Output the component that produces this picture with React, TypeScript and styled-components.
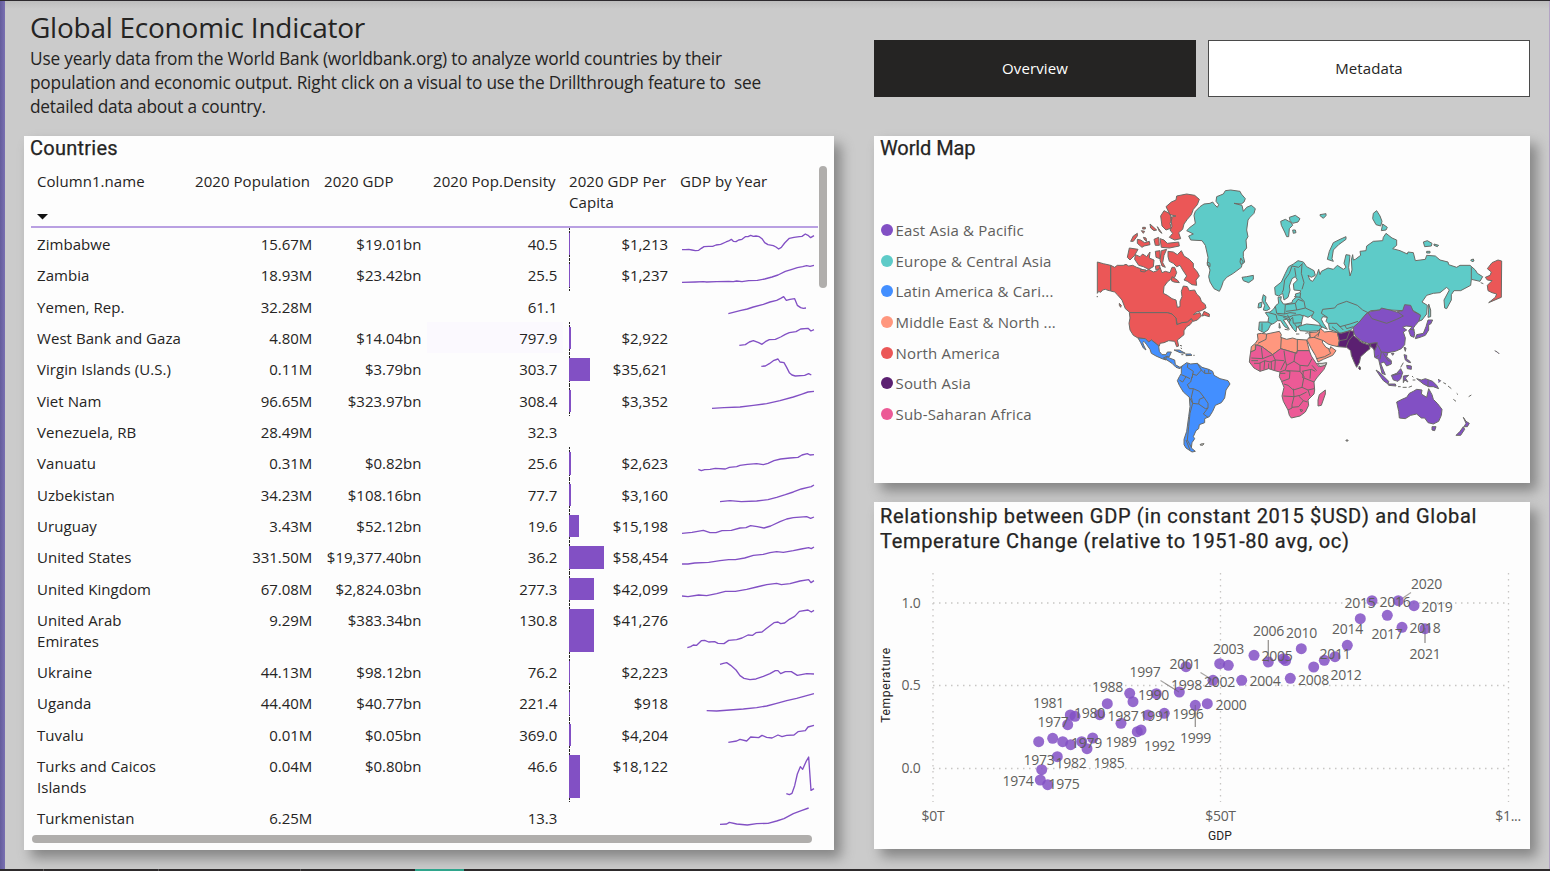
import React from "react";
import styled, { createGlobalStyle } from "styled-components";

const Global = createGlobalStyle`
  body { margin: 0; font-family: "Open Sans", "Noto Sans", sans-serif; color: #252423; }
  * { box-sizing: border-box; }
`;

const Page = styled.div`
  width: 1550px;
  height: 871px;
  overflow: hidden;
  display: flex;
  flex-direction: column;
  background: #cbcbcb;
  border-top: 1px solid #2d2a2e;
`;
const Body = styled.div`
  flex: 1;
  display: flex;
  min-height: 0;
  border-right: 1px solid #b3a3c4;
  background: linear-gradient(#bdbdbd, #cbcbcb 8px);
`;
const Rail = styled.div`
  width: 5px;
  background: linear-gradient(90deg, #645d9c, #7a70b2);
`;
const Left = styled.div`
  width: 810px;
  margin-left: 19px;
  display: flex;
  flex-direction: column;
`;
const Right = styled.div`
  width: 656px;
  margin-left: 40px;
  display: flex;
  flex-direction: column;
`;
const Intro = styled.header`
  height: 135px;
  padding: 6px 0 0 6px;
`;
const Heading = styled.h1`
  margin: 0;
  font-size: 28px;
  line-height: 40px;
  font-weight: 400;
  letter-spacing: -0.25px;
  white-space: nowrap;
`;
const Description = styled.p`
  margin: 0;
  font-size: 17.3px;
  line-height: 24px;
  letter-spacing: -0.21px;
  white-space: pre;
`;
const Card = styled.section<{ $h: number; $gap?: number }>`
  height: ${(p) => p.$h}px;
  margin-top: ${(p) => p.$gap ?? 0}px;
  flex: none;
  background: #fdfdfd;
  box-shadow: 7px 8px 12px 0 #858585;
  display: flex;
  flex-direction: column;
`;
const CardTitle = styled.h2<{ $track: number; $drop?: number }>`
  margin: 0;
  padding: ${(p) => p.$drop ?? 0}px 0 0 6px;
  font: 400 20px/25px Roboto, sans-serif;
  -webkit-text-stroke: 0.25px currentColor;
  letter-spacing: ${(p) => p.$track}px;
  white-space: pre;
`;

const Tabs = styled.nav`
  display: flex;
  gap: 12px;
  height: 57px;
  margin: 39px 0;
`;
const Tab = styled.button<{ $active?: boolean }>`
  flex: 1;
  padding: 0 0 2px;
  border: 1px solid ${(p) => (p.$active ? "#252423" : "#4a4a4a")};
  background: ${(p) => (p.$active ? "#252423" : "#fff")};
  color: ${(p) => (p.$active ? "#fff" : "#252423")};
  font: 400 15px "Open Sans", sans-serif;
  letter-spacing: 0.1px;
`;

const TableArea = styled.div`
  flex: 1;
  display: flex;
  padding: 5px 7px 0 7px;
  min-height: 0;
`;
const Table = styled.div`
  width: 787px;
  font-size: 15px;
  line-height: 21px;
  letter-spacing: 0.06px;
  overflow: hidden;
`;
const HeadRow = styled.div`
  display: grid;
  grid-template-columns: 158px 129px 109px 136px 111px 144px;
  height: 62px;
  padding-top: 5px;
  border-bottom: 2px solid #b9a0e2;
`;
const HeadCell = styled.div`
  padding-left: 6px;
`;
const SortMark = styled.svg`
  display: block;
  margin-top: 22px;
`;
const Row = styled.div<{ $tall?: boolean }>`
  display: grid;
  grid-template-columns: 158px 129px 109px 129px 13px 104px 145px;
  height: ${(p) => (p.$tall ? 52 : 31.35)}px;
`;
const Cell = styled.div<{ $right?: boolean }>`
  padding: 6px 6px 0;
  text-align: ${(p) => (p.$right ? "right" : "left")};
  white-space: pre;
`;
const NumberCell = styled(Cell)`
  padding-right: 5.7px;
  letter-spacing: -0.03px;
`;
const DensityCell = styled(NumberCell)<{ $tint: boolean }>`
  margin-right: -7px;
  background: ${(p) => (p.$tint ? "#fbf9fe" : "none")};
`;
const BarCell = styled.div<{ $axis: boolean }>`
  grid-column: 5 / 7;
  display: flex;
  align-items: stretch;
  padding: 5px 5px 4px 0;
  margin-left: 13px;
  background: ${(p) =>
    p.$axis ? "repeating-linear-gradient(#252423 0 2px, transparent 2px 3px) 0 0 / 1px 100% no-repeat" : "none"};
`;
const Bar = styled.div`
  background: #8250c4;
`;
const BarValue = styled.span`
  margin-left: auto;
  padding-top: 1px;
  letter-spacing: -0.03px;
`;
const Spark = styled.svg`
  display: block;
  width: 140px;
  margin-left: 7px;
`;
const VScroll = styled.div`
  width: 8px;
  height: 122px;
  margin-left: 1px;
  border-radius: 4px;
  background: #b0aeac;
`;
const HScroll = styled.div`
  width: 780px;
  height: 8px;
  margin: 0 0 7px 8px;
  border-radius: 4px;
  background: #b0aeac;
`;

type Country = {
  name: string;
  pop: string;
  gdp: string;
  density: string;
  perCapita: string;
  bar: number;
  top: number;
  line: string;
  tall?: boolean;
};

const countries: Country[] = [
  { name: "Zimbabwe", pop: "15.67M", gdp: "$19.01bn", density: "40.5", perCapita: "$1,213", bar: 1, top: 12, line: "66,77 76,77 86,76 96,78 106,80 116,79 124,73 132,68 146,67 158,67 168,63 182,61 198,54 206,51 214,46 220,52 228,53 236,48 246,46 256,38 264,38 272,34 280,37 288,36 298,38 306,44 314,56 324,62 340,65 348,69 356,75 364,70 374,57 388,43 402,40 418,38 426,37 436,30 444,34 452,41 462,35" },
  { name: "Zambia", pop: "18.93M", gdp: "$23.42bn", density: "25.5", perCapita: "$1,237", bar: 1, top: 106, line: "66,176 106,175 130,174 140,175 170,174 206,173 220,174 230,172 246,174 266,171 292,170 314,166 336,160 354,154 376,143 396,137 412,132 428,129 440,126 450,128 462,125" },
  { name: "Yemen, Rep.", pop: "32.28M", gdp: "", density: "61.1", perCapita: "", bar: 0, top: 200, line: "205,268 240,259 262,254 280,248 310,240 330,233 350,228 362,222 371,217 379,228 390,225 404,223 412,243 422,250 430,252 438,251" },
  { name: "West Bank and Gaza", pop: "4.80M", gdp: "$14.04bn", density: "797.9", perCapita: "$2,922", bar: 1.6, top: 294, line: "238,364 256,362 268,354 280,350 296,356 306,361 316,353 328,347 346,346 362,339 376,331 388,326 408,323 422,315 444,313 453,321 462,317" },
  { name: "Virgin Islands (U.S.)", pop: "0.11M", gdp: "$3.79bn", density: "303.7", perCapita: "$35,621", bar: 21, top: 388, line: "304,428 316,427 328,420 340,411 354,406 360,415 372,417 380,431 388,447 396,454 406,457 434,455 446,450 454,454" },
  { name: "Viet Nam", pop: "96.65M", gdp: "$323.97bn", density: "308.4", perCapita: "$3,352", bar: 1.8, top: 482, line: "156,552 192,550 240,548 280,543 320,538 360,529 400,518 424,510 444,503 462,501" },
  { name: "Venezuela, RB", pop: "28.49M", gdp: "", density: "32.3", perCapita: "", bar: 0, top: 576, line: "" },
  { name: "Vanuatu", pop: "0.31M", gdp: "$0.82bn", density: "25.6", perCapita: "$2,623", bar: 1.5, top: 670, line: "115,737 124,741 134,738 150,737 166,734 196,736 208,731 230,729 240,725 262,722 290,720 310,723 324,719 342,711 362,706 390,703 414,701 426,694 442,690 450,694 462,693" },
  { name: "Uzbekistan", pop: "34.23M", gdp: "$108.16bn", density: "77.7", perCapita: "$3,160", bar: 1.7, top: 764, line: "180,832 210,829 244,832 290,830 324,826 350,819 376,811 400,803 424,794 444,789 454,787 462,782" },
  { name: "Uruguay", pop: "3.43M", gdp: "$52.12bn", density: "19.6", perCapita: "$15,198", bar: 9.5, top: 858, line: "66,928 96,925 130,919 150,926 168,926 186,920 214,919 240,912 258,911 272,905 292,908 312,912 332,906 360,893 380,885 400,881 440,878 452,883 462,879" },
  { name: "United States", pop: "331.50M", gdp: "$19,377.40bn", density: "36.2", perCapita: "$58,454", bar: 34.5, top: 7, line: "66,76 84,76 104,73 146,71 180,66 206,63 226,63 254,58 280,50 310,47 330,42 350,39 370,41 400,36 424,31 446,27 454,30 462,25" },
  { name: "United Kingdom", pop: "67.08M", gdp: "$2,824.03bn", density: "277.3", perCapita: "$42,099", bar: 24.5, top: 101, line: "66,170 84,172 116,167 140,169 170,163 196,156 226,156 260,150 290,143 320,136 350,132 364,136 390,133 420,125 446,121 453,130 462,124" },
  { name: "United Arab\nEmirates", pop: "9.29M", gdp: "$383.34bn", density: "130.8", perCapita: "$41,276", bar: 24.5, top: 195, tall: true, line: "82,326 92,323 100,318 110,319 124,305 134,304 146,309 164,308 174,313 192,314 206,304 230,302 246,297 264,288 278,289 288,281 306,279 318,269 330,260 342,251 354,249 362,254 374,252 388,241 404,232 418,217 444,213 454,219 462,214" },
  { name: "Ukraine", pop: "44.13M", gdp: "$98.12bn", density: "76.2", perCapita: "$2,223", bar: 1.4, top: 351, line: "180,376 190,373 200,371 212,379 228,393 240,410 252,418 270,422 288,420 310,412 330,404 346,395 354,395 362,404 376,398 394,398 412,409 440,404 462,405" },
  { name: "Uganda", pop: "44.40M", gdp: "$40.77bn", density: "221.4", perCapita: "$918", bar: 0.8, top: 445, line: "140,516 170,517 210,514 250,511 290,507 320,502 350,494 380,486 410,479 440,471 462,465" },
  { name: "Tuvalu", pop: "0.01M", gdp: "$0.05bn", density: "369.0", perCapita: "$4,204", bar: 2.4, top: 539, line: "205,609 230,605 240,600 260,605 272,593 296,595 306,588 320,594 336,596 354,587 366,592 380,588 402,587 414,577 436,574 444,563 462,558" },
  { name: "Turks and Caicos\nIslands", pop: "0.04M", gdp: "$0.80bn", density: "46.6", perCapita: "$18,122", bar: 11, top: 633, tall: true, line: "379,764 388,767 396,763 404,740 412,705 421,683 428,691 438,668 446,654 453,754 462,749" },
  { name: "Turkmenistan", pop: "6.25M", gdp: "", density: "13.3", perCapita: "", bar: 0, top: 789, line: "180,856 200,855 208,850 230,855 262,858 290,854 324,853 350,846 372,839 400,824 424,815 446,807" },
];

const MapBody = styled.div`
  display: flex;
  flex: 1;
`;
const Legend = styled.ul`
  list-style: none;
  margin: 0;
  padding: 54px 0 0 7px;
  width: 206px;
  font-size: 15px;
  letter-spacing: 0.18px;
  color: #605e5c;
`;
const LegendItem = styled.li<{ $color: string }>`
  display: flex;
  align-items: center;
  gap: 2.5px;
  height: 30.6px;
  white-space: nowrap;
  &::before {
    content: "";
    width: 12px;
    height: 12px;
    border-radius: 50%;
    background: ${(p) => p.$color};
  }
`;
const MapSvg = styled.svg`
  margin-top: 19px;
`;

const PURPLE = "#8250c4";
const TEAL = "#5ecbc8";
const BLUE = "#438fff";
const PEACH = "#ff977e";
const RED = "#eb5757";
const PLUM = "#5b2071";
const PINK = "#ec5a96";

const legend: [string, string][] = [
  ["East Asia & Pacific", PURPLE],
  ["Europe & Central Asia", TEAL],
  ["Latin America & Cari...", BLUE],
  ["Middle East & North ...", PEACH],
  ["North America", RED],
  ["South Asia", PLUM],
  ["Sub-Saharan Africa", PINK],
];

type Shape = { x: number; y: number; fill: string; d: string };

const shapes: Shape[] = [
  // Alaska, Canada and the Arctic islands
  { x: 0, y: 0, fill: RED, d: "M52,246L70,251L92,256V333L84,331L76,328L68,330L62,337L56,334L52,340ZM92,256L104,262L112,256L130,256L138,253L146,258L158,256L170,262L182,266L196,274L206,268L220,276L232,272L240,262L246,278L256,274L270,278L276,262L284,262L290,278L284,292L272,298L262,306L252,320L250,340L262,346L276,356L288,360L292,382L300,380L300,364L306,350L304,334L310,318L322,320L328,332L344,330L350,342L360,352L364,364L376,374L378,384L364,392L350,396L340,404L352,400L360,398L364,408L352,420L340,424L334,416L322,428L308,428L292,434L288,414L276,402L262,398H150L136,386L126,360L112,344L104,336L92,333Z" },
  { x: 0, y: 0, fill: RED, d: "M290,48L320,42L344,46L358,58L352,74L340,88L334,104L322,118L312,132L308,148L296,158L302,176L284,180L268,172L278,160L270,150L276,140L272,112L288,108L270,104L258,80L274,66L288,60ZM252,92L268,100L276,116L270,130L274,144L258,150L246,138L242,108ZM210,132L230,150L222,152L212,144ZM232,140L246,160L238,154ZM188,142h8v5h-8ZM184,152l10,2l-4,6ZM152,184L160,168L172,160V168L160,184ZM172,178L182,180L194,188L208,184L210,194L192,198L186,202L172,190ZM190,172l8,2l2,10l-6,-4ZM222,178L236,172L238,196L226,196ZM240,176L252,180L262,190L296,186L298,198L268,204L244,202ZM148,204L174,208L164,226L150,240L142,232ZM166,224L180,230L188,222L200,230L210,216L208,234L222,240L220,260L206,268L190,260L176,256L164,238ZM226,214L240,212V236L228,232ZM244,212L260,208L252,226L248,248L256,262L246,258L240,240ZM264,214L280,216L292,224L304,212L312,228L328,238L340,250V262L352,276L358,288L348,300L350,316L336,314L322,304L312,300L320,288L308,270L300,256L290,260L280,250L268,244L264,230ZM276,290L292,300L298,308L282,306L274,302ZM372,394L388,402V410L374,406L366,408ZM182,268l16,2l-4,6l-12,-2ZM226,258l14,-2l-2,10l-10,4ZM118,370l6,6l-2,6l-4,-6ZM50,350l4,0" },
  { x: 0, y: 390, fill: RED, d: "M148,8H262L276,12L288,24L290,44L306,38L322,36L334,26L338,34L330,44L320,50L312,62V74L300,84L292,90L296,108L290,110L284,94L266,92L252,98L240,100L238,108L222,96L214,90L206,96L196,86L174,84L160,76L150,60L147,40L150,24Z" },
  // Latin America
  { x: 0, y: 390, fill: BLUE, d: "M174,84L196,86L206,96L214,90L222,96L236,108L238,124L246,134L258,134L262,126L274,126L268,140L258,142V150L246,146L228,138L214,130L210,118L200,104L192,94L188,98L192,108L198,120L190,114L182,98ZM250,144L262,138L268,144L284,150L286,164L300,172L306,168L300,176L288,172L276,160L264,152ZM282,120L298,120L316,130L300,128ZM318,132h14l4,4l-18,1ZM304,134h6M340,136h4M300,106l6,2M302,114l4,2" },
  { x: 0, y: 390, fill: BLUE, d: "M306,168L320,158L332,162L352,160L366,172L386,178L398,184L402,196L420,206L444,212L450,222L438,240L434,264L424,278L406,286L398,304L388,320L374,326V338L358,344L356,356L348,362L340,380L344,386L336,398L334,414L346,424L336,426L318,414L312,404V388L320,364L326,320L330,290L328,262L310,246L298,226L292,212L298,200L304,190V174Z" },
  // Greenland, Iceland and the northern islands
  { x: 0, y: 0, fill: TEAL, d: "M408,64L410,50L430,42L436,32L452,30L480,34L484,42L496,56L492,66L484,72L462,70L486,76L490,94L500,82L514,76L526,86L522,100L510,112L504,120L500,150L504,170L498,180L500,204L490,216V230L494,246L486,254L484,262L460,280L440,292L430,304L424,322L418,334L402,326L390,306L386,290L390,270L382,250L384,232L376,196L366,182L332,180L326,168L340,162L320,152L330,142L346,130L342,106L346,94L360,80L372,72L390,70L398,66L404,74L412,82L416,74ZM486,292L500,290L520,286V298L506,308L490,302ZM482,234l8,12l-6,8l-4,-8ZM382,246l8,4v10l-8,-4Z" },
  { x: 480, y: 0, fill: TEAL, d: "M122,124L136,118L154,128L158,136L148,146L146,170L140,170L134,156L124,136ZM148,112L166,106L180,116L174,126L158,130L150,122ZM158,150h8l2,8l-8,2ZM240,104l18,-3v6l-8,8l-10,-8ZM318,170V178L296,194L280,210L276,236L280,244L262,238L268,214L280,188L300,178ZM410,92L420,108L426,124L422,138L408,134L398,116L400,100ZM428,132L442,142L438,150L424,152ZM550,186L562,182L576,190L574,198L554,200ZM582,192l14,4l-4,4l-10,-4ZM560,214h10v5h-10ZM692,240l8,-3l2,6l-6,2ZM70,344L78,350L76,364L90,386L80,392L70,390L74,376L66,360ZM56,370L66,366L64,382L54,384ZM566,372L572,390V410L564,412L566,390Z" },
  // Mainland Europe, Russia and Central Asia
  { x: 480, y: 0, fill: TEAL, d: "M190,246L174,242L160,252L146,260L136,280L124,306L104,322L106,344L116,348L128,340L132,360L144,352L150,330L148,318L156,296L166,290L172,300L160,312L162,330L182,332L180,338L166,342L168,352L158,360L156,368L138,372L130,372L122,360L124,350L114,352L116,370L108,376L100,388L90,396L76,398L86,412L84,426H58L56,450L72,458L84,450L92,434L102,430L112,422L122,422L134,440L148,448L140,434L130,420L140,418L150,432L160,448L168,456L170,442L184,434L186,420L190,406L204,412L218,404L214,412L236,428L244,440L262,448L250,430L244,418L248,410L262,412L258,424L266,432L268,448L290,456L300,460L330,452L340,442L360,424L380,400L392,392L420,390L450,390L488,392L520,392L540,404L536,424L546,420L560,402L562,376L546,366L560,346L580,340L600,338L620,322L628,330L612,360L614,384L620,386L634,360V344L642,332H662L692,316L694,298L720,304L728,290L712,280L706,270L690,256H660L650,262L626,254L624,246L600,240L586,228L560,226L556,238L526,242L520,218L504,216L502,222L480,212L458,206L470,196V180L456,174L438,160L430,172L428,182L400,184L380,198L378,212L360,214L362,226L346,238L340,240L338,224L334,240L336,270L330,288L326,262L330,226L318,224L312,250L318,262L310,268L292,256L280,268L264,264L244,274L240,284L236,268L230,286L218,304L210,300L204,286L214,292L226,286L222,272L200,260Z" },
  { x: 480, y: 390, fill: TEAL, d: "M174,50L200,42L236,46L246,50L238,62L206,64L180,62ZM118,40l3,14l-4,0ZM134,58l12,2M168,72h10M196,70l8,-2" },
  { x: 480, y: 0, fill: RED, d: "M785,243L774,240L756,248L742,266L754,276L750,286L736,292L742,300L756,302L742,316L744,332L756,338L770,342L766,352L746,368L774,356L784,352ZM722,308l8,3" },
  // East Asia and Pacific
  { x: 480, y: 390, fill: PURPLE, d: "M340,52L356,38L378,12L392,4L420,0L424,-6L450,0L470,6L488,2L494,-16L512,-14L520,4L542,16L536,34L526,46L520,54L524,70L522,82L512,78L506,62L516,50L498,48L488,52L500,60L490,66L496,84L494,104L484,116L466,124L454,126L444,128L440,140L454,152V162L440,168L432,156L422,160L430,180L436,194L426,190L420,166L416,148L404,142L402,120L412,106L408,98L390,102L366,94L348,80L340,66Z" },
  { x: 480, y: 390, fill: PURPLE, d: "M564,30L578,30L572,42L566,44V60L556,76L540,82L526,86L530,74L550,70L558,50ZM492,112l6,2l-2,10ZM454,130h8l-4,6ZM492,134L500,136V148L508,152L512,158L504,156L496,150ZM500,166L514,168V178L502,176ZM482,172L490,158M408,180L420,188L436,204L446,214L444,222L430,212L420,198ZM444,222L466,222L468,228L446,226ZM474,230h8M488,232h12M506,232l10,-4M454,196L470,190L482,176L488,188L482,206L474,214L460,210ZM490,198L506,196L496,204L504,216L494,210L490,218ZM516,198l4,4M518,210h8M530,206L544,210L556,206L578,214L590,226L596,236L580,230L566,230L550,222L540,214ZM594,208l8,4l-6,6M610,218l8,4M624,228l10,8M640,268l8,6M650,250l4,4M686,260l8,-5M470,276L486,268L500,262L508,250L520,244L530,238L546,240L544,252L560,262L566,236L576,254L580,268L592,280L606,298L604,316L596,334L580,342L564,338L554,324L544,324L530,312L512,316L496,326L478,324L476,304ZM576,350L588,350L584,362L576,360ZM670,322L678,334L688,340L682,350L672,350L678,340ZM670,350L674,358L662,376L648,376L660,364ZM764,122l8,4l6,6" },
  { x: 480, y: 390, fill: PEACH, d: "M52,72L64,70L80,72L118,64L124,74L122,82L140,88L158,84L170,88L200,90L208,122H172L170,130L122,116L98,134L66,110L52,104L46,120L32,126L34,110L46,100L54,88ZM206,68L230,66L242,56L254,66L270,64L292,68L298,92L294,110L276,106L264,102L250,92L246,96L258,112L270,118L272,110L288,122L278,136L250,148L234,156L226,136L214,116L204,96L200,90L210,80Z" },
  { x: 480, y: 390, fill: PINK, d: "M46,104L66,110L98,134L122,116L170,130L172,122H208L214,138L226,156L236,170L260,160L252,178L230,204L222,216L224,240L222,252L204,270L206,286L196,306L180,318L154,324L148,316L144,300L130,274L126,258L132,232L124,212L118,200L120,186L104,182L86,176L60,184L42,174L28,156L30,138L32,126L46,120ZM256,240V252L244,286L234,288V270L238,254Z" },
  { x: 480, y: 390, fill: PLUM, d: "M292,68L304,70L330,62L342,64L340,76L350,84L366,98L384,104L392,100L412,98L410,108L404,122L396,112L388,108L390,116L380,124L362,140L358,158L350,172L344,160L334,136L332,122L320,112L294,110L298,92ZM358,168l4,6l-2,6l-4,-4Z" },
  { x: 480, y: 390, fill: "#d0cfce", d: "M232,160L246,160L260,158L256,166L240,170ZM318,390h6v3h-6Z" },
  { x: 0, y: 390, fill: "#d0cfce", d: "M362,402l10,-1l-4,5l-8,-1Z" },
];

const borders: { x: number; y: number; d: string }[] = [
  { x: 0, y: 390, d: "M324,160L322,172L340,184L336,204M304,194L318,200L330,206M298,210L308,216L318,200M336,200L332,216L322,224L328,236L340,236L334,262M340,236L358,244L372,262L358,268L356,282L338,280L334,262M338,280L330,310L326,350L322,390L334,412M356,282L376,296L384,294V280L372,262M384,294L370,312L384,322M352,160L364,180L374,190L394,190M374,180V190M386,178V188M336,192L350,196L364,180M328,262L338,280M318,390L330,420" },
  { x: 480, y: 0, d: "M156,258L148,280L134,300L130,330L126,338M164,264L168,290M156,258L176,262L188,250M186,252L184,280L192,308L186,328M182,338L180,352L192,364L196,384L222,396L218,404M262,412L244,400L248,388L284,384L292,374L320,364L352,376L368,390L384,398M266,430L290,430L300,440L330,432L354,424M290,430L310,450M276,440L296,456M314,436L320,446L340,440M106,378L110,400L134,402L136,374L166,370L170,390L138,394M166,370L174,358L190,364M162,350L182,352M170,390L196,384M86,398L108,404L112,420M112,404L146,412L160,406L180,404L190,408M158,412L160,430L184,428M130,412L150,420L148,430L158,444M66,430V452M134,402L150,398L168,400M150,420L158,412M84,426L96,432M694,262V298M142,404L152,422M164,432L172,444" },
  { x: 480, y: 390, d: "M384,8L396,26L440,40L470,28L490,18L470,4M414,106L424,126L444,128M424,126L420,148M430,130L444,152L452,154M416,136L406,142M510,58L524,60M318,112L326,92L338,78M356,92L388,106M298,92L320,88L330,62M392,100V112M458,196L482,190M564,212V230M124,82L122,116M172,88V122M80,72L78,88L54,100M206,84L222,82L240,66M222,82L250,92M210,70V84M234,80L240,56M230,146L254,140L272,130M266,118L272,130M46,120L48,104M64,112L68,146L34,144M68,146L98,134L106,150L132,152M106,150L104,182M132,122L136,152L122,180M166,128L162,154L140,166L136,152M162,154L180,166L204,168L216,146M140,166L136,180L120,186M140,182L180,184L192,200L186,232L160,240L144,226L132,222M136,182L150,184L148,206L126,214M186,184L214,178L226,184M192,204L222,216M186,232L204,240L222,236M130,258L162,260L160,236M162,260L156,284V294L144,300M162,260L180,256L200,246M156,292L176,290L190,272L176,258M190,272L202,276M60,158V184M74,152L72,178M86,160V176M42,160L58,160L74,152L90,156L106,150M180,166V184M216,166L230,182M34,152H54M180,298l8,2l-4,6ZM204,240L210,258M120,190H136M190,184L188,204M94,156V178M212,180L210,206" },
];

const ChartSvg = styled.svg`
  display: block;
  flex: none;
  margin-top: 6px;
  font-family: "Open Sans", sans-serif;
  letter-spacing: -0.3px;
`;

const dots: [number, number][] = [
  [1038.7, 741.7], [1052.7, 738.3], [1062.7, 741.7], [1070.7, 744.7], [1081.7, 741.7], [1092.7, 738],
  [1087, 748.7], [1057.3, 756.7], [1041.7, 769.7], [1040.3, 780], [1047.7, 784.7], [1067.7, 724.7],
  [1070.3, 715], [1075, 716.3], [1099.7, 714.7], [1107.3, 703.7], [1129.7, 693.3], [1133, 701.7],
  [1121, 723.3], [1137.3, 731.7], [1141, 730], [1148, 715], [1156.3, 693.7], [1164.3, 713.3],
  [1179.3, 692], [1186, 666.7], [1195.3, 705.3], [1207.3, 703.7], [1213, 680.3], [1219.7, 663.7],
  [1228.3, 665.3], [1241.7, 680.3], [1254, 655.3], [1268.3, 662], [1283.3, 658.7], [1285.6, 660.5],
  [1290.3, 678.3], [1301.3, 648.7], [1313.7, 667], [1324.3, 660.3], [1335, 656.7], [1347.3, 645.3],
  [1360.3, 618.7], [1372, 600.7], [1387.3, 615.3], [1398.3, 600.7], [1402, 627.3], [1414, 605.7], [1425, 628.7],
];

const years: [number, number, number][] = [
  [2020, 1426.5, 584], [2015, 1360, 603], [2016, 1395, 602], [2019, 1437, 607], [2014, 1347.5, 629],
  [2017, 1387, 634], [2018, 1425, 628], [2021, 1425, 654], [2006, 1268.5, 631], [2010, 1301.5, 633],
  [2003, 1228.5, 649], [2005, 1277, 656], [2011, 1335, 654], [2001, 1185, 664], [2012, 1346, 675],
  [2008, 1313.5, 680], [2004, 1265, 681], [1997, 1145, 672], [1998, 1186.5, 685], [2002, 1219.5, 682],
  [1988, 1107.5, 687], [1990, 1153.5, 695], [2000, 1231, 705], [1981, 1048.5, 703], [1980, 1089.5, 713],
  [1987, 1123, 716], [1991, 1155, 716], [1996, 1188, 714], [1977, 1053, 722], [1999, 1195.5, 738],
  [1979, 1086.5, 743], [1989, 1121, 742], [1992, 1159.5, 746], [1973, 1039, 760], [1982, 1071, 763],
  [1985, 1109, 763], [1974, 1018, 781], [1975, 1064, 784],
];

const BottomStrip = styled.div`
  height: 2px;
  display: flex;
  background: #2d2a2b;
`;
const StripMark = styled.i<{ $gap: number; $w: number; $teal?: boolean }>`
  margin-left: ${(p) => p.$gap}px;
  width: ${(p) => p.$w}px;
  background: ${(p) => (p.$teal ? "#2fa58c" : "#5a5758")};
`;

function CountriesTable() {
  return (
    <Table>
      <HeadRow>
        <HeadCell>
          Column1.name
          <SortMark width="11" height="6"><path d="M0 0H11L5.5 5.5Z" fill="#111" /></SortMark>
        </HeadCell>
        <HeadCell>2020 Population</HeadCell>
        <HeadCell>2020 GDP</HeadCell>
        <HeadCell>2020 Pop.Density</HeadCell>
        <HeadCell>2020 GDP Per Capita</HeadCell>
        <HeadCell>GDP by Year</HeadCell>
      </HeadRow>
      {countries.map((c) => (
        <Row key={c.name} $tall={c.tall}>
          <Cell>{c.name}</Cell>
          <NumberCell $right>{c.pop}</NumberCell>
          <NumberCell $right>{c.gdp}</NumberCell>
          <DensityCell $right $tint={c.density === "797.9"}>{c.density}</DensityCell>
          <BarCell $axis={c.bar > 0}>
            <Bar style={{ width: c.bar }} />
            <BarValue>{c.perCapita}</BarValue>
          </BarCell>
          <Spark height={c.tall ? 52 : 31.33} viewBox={`60 ${c.top} 420 ${c.tall ? 156 : 94}`}>
            <polyline points={c.line} fill="none" stroke="#8250c4" strokeWidth="4" strokeLinejoin="round" />
          </Spark>
        </Row>
      ))}
    </Table>
  );
}

function WorldMap() {
  return (
    <MapSvg width="440" height="280" viewBox="0 0 1320 840">
      <g stroke="#6b6b66" strokeWidth="3" strokeLinejoin="round">
        {shapes.map((s, i) => (
          <path key={i} d={s.d} fill={s.fill} transform={`translate(${s.x} ${s.y})`} />
        ))}
        {borders.map((b, i) => (
          <path key={i} d={b.d} fill="none" transform={`translate(${b.x} ${b.y})`} />
        ))}
      </g>
    </MapSvg>
  );
}

function ScatterChart() {
  return (
    <ChartSvg width="656" height="290" viewBox="874 560 656 290">
      <path
        d="M933 573V802M1220.5 573V802M1508.5 573V802M933 603H1508M933 685.5H1508M933 768.5H1508"
        stroke="#c8c6c4" strokeWidth="1.3" strokeDasharray="1.5 4.5" fill="none"
      />
      <path d="M1268.3 640V662M1425 628V643M1400 600L1411 592.5M1160.5 680.5L1179 692M1200.5 672.5L1213 680.3M1195.3 705V727" stroke="#a8a6a4" strokeWidth="1.2" />
      <g fill="#8250c4" fillOpacity="0.85">
        {dots.map(([x, y], i) => <circle key={i} cx={x} cy={y} r="5.5" />)}
      </g>
      <path d="M1268.3 640V662M1425 628V643M1165 683.5L1179 692M1195.3 705V727" stroke="#6b6560" strokeOpacity="0.35" />
      <g fill="#605e5c" fontSize="14" textAnchor="middle">
        {years.map(([year, x, y]) => <text key={year} x={x} y={y + 5}>{year}</text>)}
        <text x="933" y="821">$0T</text>
        <text x="1220.5" y="821">$50T</text>
        <text x="1508" y="821">$1...</text>
        <text x="911" y="608">1.0</text>
        <text x="911" y="690">0.5</text>
        <text x="911" y="773">0.0</text>
      </g>
      <g fill="#252423" fontSize="12" fontFamily="Roboto" textAnchor="middle">
        <text x="1220" y="840" letterSpacing="0.1">GDP</text>
        <text x="0" y="0" letterSpacing="0.7" transform="translate(890 685) rotate(-90)">Temperature</text>
      </g>
    </ChartSvg>
  );
}

export default function App() {
  return (
    <>
      <Global />
      <Page>
        <Body>
          <Rail />
          <Left>
            <Intro>
              <Heading>Global Economic Indicator</Heading>
              <Description>
                {"Use yearly data from the World Bank (worldbank.org) to analyze world countries by their\npopulation and economic output. Right click on a visual to use the Drillthrough feature to  see\ndetailed data about a country."}
              </Description>
            </Intro>
            <Card $h={714}>
              <CardTitle $track={0.25}>Countries</CardTitle>
              <TableArea>
                <CountriesTable />
                <VScroll />
              </TableArea>
              <HScroll />
            </Card>
          </Left>
          <Right>
            <Tabs>
              <Tab $active>Overview</Tab>
              <Tab>Metadata</Tab>
            </Tabs>
            <Card $h={347}>
              <CardTitle $track={-0.1}>World Map</CardTitle>
              <MapBody>
                <Legend>
                  {legend.map(([label, color]) => (
                    <LegendItem key={label} $color={color}>{label}</LegendItem>
                  ))}
                </Legend>
                <WorldMap />
              </MapBody>
            </Card>
            <Card $h={347} $gap={19}>
              <CardTitle $track={0.68} $drop={2}>
                {"Relationship between GDP (in constant 2015 $USD) and Global\nTemperature Change (relative to 1951-80 avg, oc)"}
              </CardTitle>
              <ScatterChart />
            </Card>
          </Right>
        </Body>
        <BottomStrip>
          <StripMark $gap={43} $w={1} />
          <StripMark $gap={114} $w={1} />
          <StripMark $gap={141} $w={1} />
          <StripMark $gap={114} $w={49} $teal />
        </BottomStrip>
      </Page>
    </>
  );
}
